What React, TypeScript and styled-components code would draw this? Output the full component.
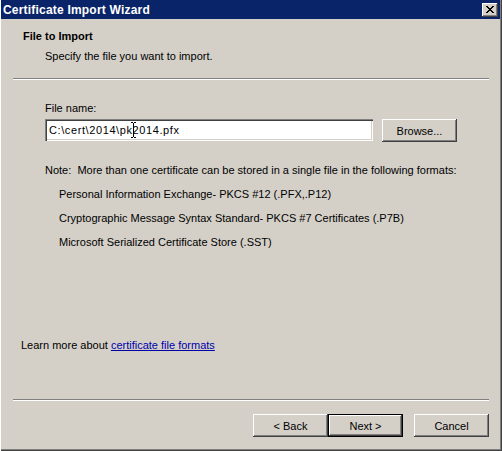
import React from "react";
import styled, { createGlobalStyle } from "styled-components";

const GlobalStyle = createGlobalStyle`
  html, body {
    margin: 0;
    padding: 0;
    background: #d4d0c8;
  }
  body {
    font-family: "Liberation Sans", Arial, sans-serif;
    font-size: 11px;
    color: #000;
  }
`;

const Window = styled.div`
  box-sizing: border-box;
  width: 502px;
  height: 451px;
  display: flex;
  flex-direction: column;
  background: #d4d0c8;
  padding: 0 2px 2px 1px;
  box-shadow: inset 1px 0 #ffffff, inset -1px -1px #404040,
    inset -2px -2px #808080;
`;

const TitleBar = styled.div`
  height: 19px;
  flex-shrink: 0;
  display: flex;
  align-items: center;
  justify-content: space-between;
  padding: 0 2px 0 2px;
  background: #0a246a;
  color: #fff;
  font-weight: bold;
  font-size: 12px;
`;

const TitleText = styled.span`
  line-height: 19px;
  padding-top: 1px;
  letter-spacing: 0.2px;
`;

const CloseButton = styled.div`
  box-sizing: border-box;
  width: 16px;
  height: 14px;
  display: flex;
  align-items: center;
  justify-content: center;
  background: #d4d0c8;
  box-shadow: inset -1px -1px #404040, inset 1px 1px #ffffff,
    inset -2px -2px #808080;
`;

const Body = styled.div`
  flex: 1;
  display: flex;
  flex-direction: column;
`;

const Header = styled.div`
  padding: 11px 0 0 22px;
`;

const HeaderTitle = styled.div`
  font-weight: bold;
  line-height: 13px;
`;

const HeaderSub = styled.div`
  margin: 7px 0 0 22px;
  line-height: 13px;
`;

const Separator = styled.div<{ $top: number }>`
  margin: ${(p) => p.$top}px 11px 0 12px;
  height: 0;
  border-top: 1px solid #808080;
  border-bottom: 1px solid #ffffff;
`;

const Content = styled.div`
  padding: 22px 0 0 44px;
`;

const Label = styled.div`
  line-height: 13px;
`;

const FieldRow = styled.div`
  display: flex;
  align-items: flex-start;
  gap: 9px;
  margin-top: 4px;
`;

const TextBox = styled.div`
  box-sizing: border-box;
  width: 328px;
  height: 22px;
  padding: 0 4px;
  display: flex;
  align-items: center;
  letter-spacing: 0.6px;
  background: #fff;
  box-shadow: inset 1px 1px #808080, inset 2px 2px #404040,
    inset -1px -1px #ffffff, inset -2px -2px #d4d0c8;
`;

const CursorAnchor = styled.span`
  position: relative;
  display: inline-block;
  width: 0;
  height: 13px;
`;

const Cursor = styled.svg`
  position: absolute;
  left: -2px;
  top: -2px;
`;

const Button = styled.div<{ $default?: boolean }>`
  box-sizing: border-box;
  width: 75px;
  height: 23px;
  display: flex;
  align-items: center;
  justify-content: center;
  background: #d4d0c8;
  box-shadow: inset -1px -1px #404040, inset 1px 1px #ffffff,
    inset -2px -2px #808080;
  border: ${(p) => (p.$default ? "1px solid #000" : "none")};
`;

const Note = styled.div`
  margin-top: 22px;
  line-height: 13px;
`;

const FormatList = styled.div`
  padding-left: 14px;
`;

const FormatItem = styled.div`
  margin-top: 11px;
  line-height: 13px;
`;

const Spacer = styled.div`
  flex: 1;
`;

const LearnMore = styled.div`
  padding-left: 20px;
  line-height: 13px;
`;

const Link = styled.a`
  color: #0000a8;
  text-decoration: underline;
`;

const Footer = styled.div`
  display: flex;
  justify-content: flex-end;
  padding: 13px 11px 12px 0;
`;

const ButtonGroup = styled.div<{ $gap?: number }>`
  display: flex;
  margin-left: ${(p) => p.$gap ?? 0}px;
`;

const App = () => {
  return (
    <>
      <GlobalStyle />
      <Window>
        <TitleBar>
          <TitleText>Certificate Import Wizard</TitleText>
          <CloseButton>
            <svg width="8" height="7" viewBox="0 0 8 7" shapeRendering="crispEdges">
              <path
                d="M0 0h2v1h-2zM6 0h2v1h-2zM1 1h2v1h-2zM5 1h2v1h-2zM2 2h4v1h-4zM3 3h2v1h-2zM2 4h4v1h-4zM1 5h2v1h-2zM5 5h2v1h-2zM0 6h2v1h-2zM6 6h2v1h-2z"
                fill="#000"
              />
            </svg>
          </CloseButton>
        </TitleBar>
        <Body>
          <Header>
            <HeaderTitle>File to Import</HeaderTitle>
            <HeaderSub>Specify the file you want to import.</HeaderSub>
          </Header>
          <Separator $top={15} />
          <Content>
            <Label>File name:</Label>
            <FieldRow>
              <TextBox>
                {"C:\\cert\\2014\\pk"}
                <CursorAnchor>
                  <Cursor width="5" height="16" viewBox="0 0 5 16" shapeRendering="crispEdges">
                    <path d="M0 0h2v1h-2zM3 0h2v1h-2zM2 1h1v14h-1zM0 15h2v1h-2zM3 15h2v1h-2z" fill="#000" />
                  </Cursor>
                </CursorAnchor>
                {"2014.pfx"}
              </TextBox>
              <Button>Browse...</Button>
            </FieldRow>
            <Note>
              Note:&nbsp; More than one certificate can be stored in a single file in the following formats:
            </Note>
            <FormatList>
              <FormatItem>Personal Information Exchange- PKCS #12 (.PFX,.P12)</FormatItem>
              <FormatItem>Cryptographic Message Syntax Standard- PKCS #7 Certificates (.P7B)</FormatItem>
              <FormatItem>Microsoft Serialized Certificate Store (.SST)</FormatItem>
            </FormatList>
          </Content>
          <Spacer />
          <LearnMore>
            Learn more about <Link>certificate file formats</Link>
          </LearnMore>
          <Separator $top={47} />
          <Footer>
            <ButtonGroup>
              <Button>&lt; Back</Button>
              <Button $default>Next &gt;</Button>
            </ButtonGroup>
            <ButtonGroup $gap={11}>
              <Button>Cancel</Button>
            </ButtonGroup>
          </Footer>
        </Body>
      </Window>
    </>
  );
};

export default App;
